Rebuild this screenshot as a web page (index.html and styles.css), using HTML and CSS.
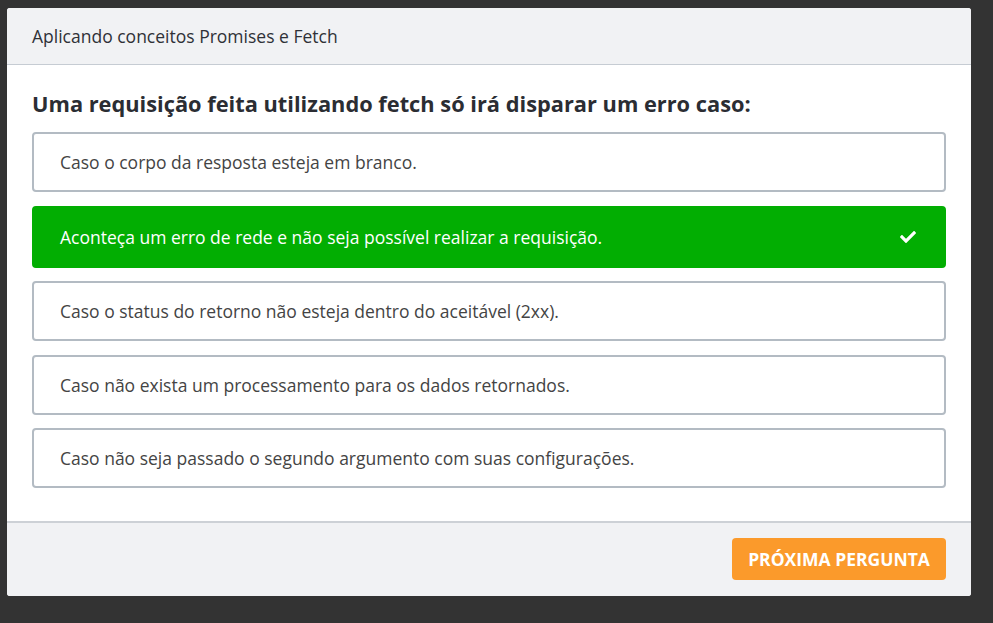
FILE: index.html
```html
<!DOCTYPE html>
<html lang="pt-BR">
<head>
<meta charset="utf-8">
<title>Aplicando conceitos Promises e Fetch</title>
<link rel="stylesheet" href="styles.css">
</head>
<body>
<div class="modal">
  <div class="modal-header">Aplicando conceitos Promises e Fetch</div>
  <div class="modal-body">
    <h2 class="question">Uma requisição feita utilizando fetch só irá disparar um erro caso:</h2>
    <div class="options">
      <div class="option">Caso o corpo da resposta esteja em branco.</div>
      <div class="option correct">
        <span>Aconteça um erro de rede e não seja possível realizar a requisição.</span>
        <svg class="check" viewBox="0 0 512 512" width="16" height="16"><path fill="#fff" d="M173.9 439.4l-166.4-166.4c-10-10-10-26.2 0-36.2l36.2-36.2c10-10 26.2-10 36.2 0L192 312.7 432.1 72.6c10-10 26.2-10 36.2 0l36.2 36.2c10 10 10 26.2 0 36.2L210.1 439.4c-10 10-26.2 10-36.2 0z"/></svg>
      </div>
      <div class="option">Caso o status do retorno não esteja dentro do aceitável (2xx).</div>
      <div class="option">Caso não exista um processamento para os dados retornados.</div>
      <div class="option">Caso não seja passado o segundo argumento com suas configurações.</div>
    </div>
  </div>
  <div class="modal-footer">
    <button class="next">PRÓXIMA PERGUNTA</button>
  </div>
</div>
</body>
</html>
```
FILE: styles.css
```css
html, body {
  margin: 0;
  padding: 0;
  background: #333333;
  height: 100%;
}
body {
  padding: 8px 0 0 7px;
  font-family: "Open Sans", "Noto Sans", sans-serif;
  box-sizing: border-box;
}
.modal {
  width: 964px;
  height: 588px;
  background: #ffffff;
  border-radius: 3px;
  overflow: hidden;
  display: flex;
  flex-direction: column;
}
.modal-header {
  height: 56px;
  flex: none;
  background: #f1f2f4;
  border-bottom: 1px solid #c6ccd3;
  padding: 0 25px;
  display: flex;
  align-items: center;
  font-size: 17.5px;
  color: #2f3137;
}
.modal-body {
  padding: 24px 25px 0 25px;
  height: 456px;
  flex: none;
  box-sizing: border-box;
}
.question {
  margin: 0 0 13px 0;
  font-size: 21.8px;
  line-height: 30px;
  font-weight: 700;
  color: #2b2d33;
}
.options {
  display: flex;
  flex-direction: column;
  gap: 13.5px;
}
.option {
  height: 60px;
  box-sizing: border-box;
  border: 2px solid #b3bbc3;
  border-radius: 4px;
  padding: 0 26px;
  display: flex;
  align-items: center;
  justify-content: space-between;
  font-size: 17.5px;
  color: #444444;
}
.option.correct {
  height: 62px;
  background: #02ae02;
  border-color: #02ae02;
  color: #ffffff;
  padding-right: 28px;
}
.check {
  display: block;
  width: 16px;
  height: 16px;
}
.modal-footer {
  flex: 1;
  background: #f1f2f4;
  border-top: 2px solid #cdd1d6;
  padding: 15px 25px 0 25px;
  display: flex;
  justify-content: flex-end;
  align-items: flex-start;
}
.next {
  height: 42px;
  width: 214px;
  border: none;
  border-radius: 4px;
  background: #fb9a2b;
  color: #ffffff;
  font-family: "Open Sans", "Noto Sans", sans-serif;
  font-weight: 700;
  font-size: 17.5px;
  padding: 0;
  cursor: pointer;
}
```
